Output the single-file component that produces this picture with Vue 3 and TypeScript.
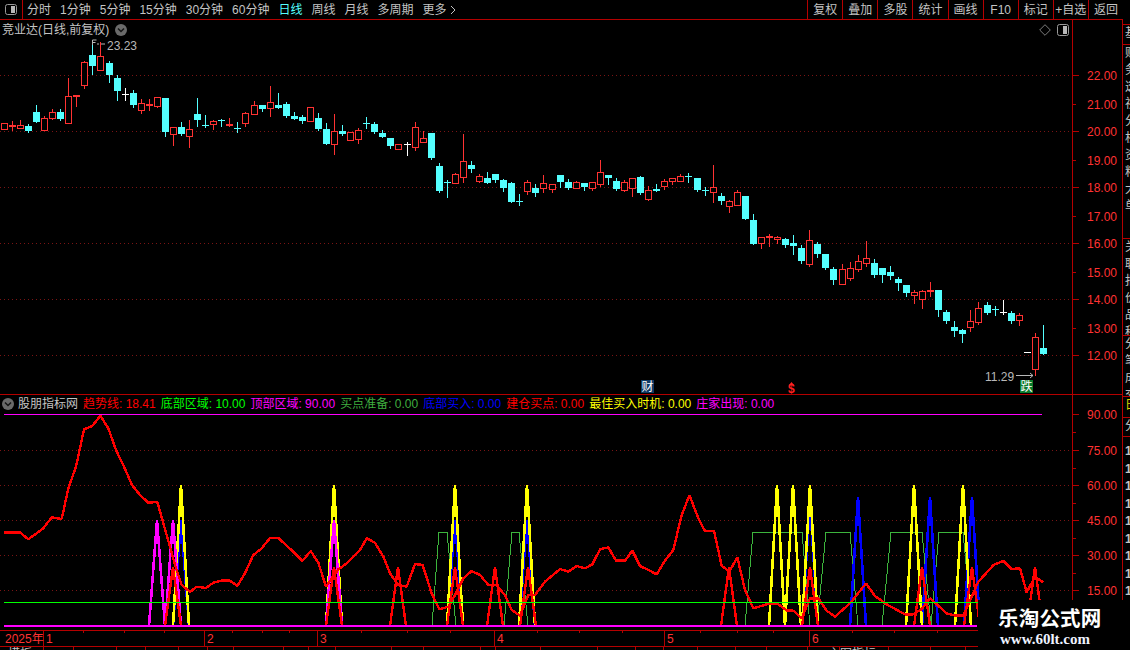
<script setup lang="ts">
type CandleKind = 'r' | 'f' | 'c' | 'w'
type CandleRow = [CandleKind, number, number, number, number]

// rows are [kind, high, bodyTop, bodyBottom, low], read off at 3x and scaled back by toCandles
const rowsA: CandleRow[] = [
	['r', 310, 310, 326, 326], ['f', 304, 316, 320, 330], ['r', 300, 316, 323, 325], ['c', 313, 319, 332, 335],
	['c', 255, 276, 306, 306], ['r', 288, 295, 329, 329], ['r', 268, 277, 293, 296], ['c', 268, 277, 297, 300],
	['r', 174, 229, 308, 308], ['f', 226, 226, 231, 258], ['r', 123, 127, 194, 204], ['c', 60, 105, 137, 162],
	['r', 65, 109, 149, 149], ['c', 123, 129, 165, 186], ['c', 166, 174, 213, 240], ['w', 204, 222, 222, 240],
	['c', 210, 219, 255, 261], ['r', 237, 250, 269, 279], ['f', 237, 252, 257, 270], ['r', 232, 232, 257, 260],
	['c', 234, 234, 335, 348], ['r', 322, 322, 341, 375], ['c', 306, 322, 342, 345], ['r', 300, 328, 347, 381],
	['c', 234, 282, 300, 318], ['c', 285, 316, 316, 322], ['r', 301, 304, 312, 327], ['c', 297, 301, 301, 318],
	['f', 294, 313, 318, 318], ['c', 306, 323, 323, 336], ['r', 277, 280, 308, 318], ['r', 243, 256, 281, 282],
	['c', 255, 255, 267, 272], ['r', 198, 247, 263, 288], ['c', 219, 255, 264, 264], ['c', 246, 252, 288, 290],
	['c', 276, 288, 297, 298], ['c', 285, 291, 303, 308], ['r', 262, 262, 302, 302], ['c', 279, 294, 327, 330],
	['c', 309, 327, 372, 372], ['r', 282, 333, 371, 402],
]
const rowsB: CandleRow[] = [
	['c', 45, 63, 72, 75], ['r', 66, 66, 90, 90], ['r', 55, 61, 87, 98], ['c', 21, 38, 38, 54],
	['c', 37, 42, 66, 68], ['c', 60, 69, 81, 82], ['c', 84, 84, 108, 113], ['r', 103, 103, 116, 116],
	['w', 97, 102, 102, 135], ['r', 37, 52, 110, 120], ['r', 64, 84, 95, 96], ['c', 69, 69, 144, 147],
	['c', 159, 168, 243, 246], ['c', 210, 216, 216, 261], ['r', 189, 193, 219, 219], ['r', 72, 154, 200, 216],
	['c', 153, 165, 177, 186], ['r', 193, 199, 213, 216], ['c', 186, 204, 219, 219], ['c', 192, 192, 210, 216],
	['c', 207, 210, 234, 243], ['c', 216, 219, 276, 276], ['c', 252, 273, 273, 285], ['r', 210, 216, 243, 252],
	['c', 222, 234, 249, 258], ['r', 195, 220, 234, 246], ['r', 222, 223, 236, 246], ['c', 195, 195, 216, 231],
	['c', 207, 216, 234, 237], ['r', 214, 217, 234, 234], ['c', 219, 219, 231, 240], ['r', 216, 217, 234, 240],
	['r', 150, 187, 222, 228], ['c', 195, 195, 204, 222], ['c', 204, 213, 237, 240], ['r', 210, 216, 240, 243],
	['r', 204, 205, 234, 258], ['c', 198, 201, 249, 252], ['r', 228, 240, 267, 270], ['c', 222, 237, 243, 243],
	['r', 207, 213, 228, 237], ['r', 204, 205, 213, 222], ['r', 192, 198, 213, 213], ['c', 189, 198, 198, 216],
	['c', 204, 204, 240, 243], ['c', 231, 240, 240, 255], ['r', 165, 231, 246, 276], ['c', 249, 258, 273, 282],
	['r', 270, 273, 288, 306],
]
const rowsC: CandleRow[] = [
	['r', 60, 67, 105, 105], ['c', 78, 78, 147, 147], ['c', 132, 150, 222, 222], ['r', 202, 202, 219, 234],
	['f', 192, 198, 204, 228], ['r', 198, 202, 208, 219], ['c', 204, 207, 225, 231], ['c', 195, 219, 228, 252],
	['c', 225, 234, 273, 279], ['r', 180, 210, 282, 288], ['c', 216, 222, 252, 261], ['c', 252, 252, 294, 297],
	['c', 291, 297, 330, 342], ['r', 282, 297, 342, 342], ['r', 276, 294, 324, 330], ['r', 255, 273, 297, 303],
	['r', 213, 264, 278, 288], ['c', 267, 279, 315, 321], ['c', 294, 294, 315, 336], ['c', 288, 306, 318, 327],
	['c', 321, 327, 339, 360], ['c', 345, 345, 369, 378], ['r', 360, 366, 376, 399], ['r', 361, 364, 388, 414],
	['f', 336, 360, 365, 378], ['c', 360, 360, 420, 438], ['c', 420, 426, 453, 459], ['c', 453, 471, 483, 498],
	['c', 477, 480, 492, 516], ['r', 420, 454, 471, 483], ['r', 396, 414, 456, 462], ['c', 396, 405, 429, 432],
	['c', 408, 417, 417, 435], ['w', 390, 427, 427, 432], ['c', 423, 429, 453, 459], ['r', 429, 436, 450, 465],
	['w', 547, 547, 547, 547], ['r', 489, 501, 597, 615], ['c', 465, 534, 552, 552],
]

const toCandles = (rows: CandleRow[], originY: number) =>
	rows.map(([kind, hi, top, bot, lo]) => ({
		kind,
		hi: Math.round(originY + hi / 3),
		top: Math.round(originY + top / 3),
		bot: Math.round(originY + bot / 3),
		lo: Math.round(originY + lo / 3),
	}))

const candles = [...toCandles(rowsA, 20), ...toCandles(rowsB, 110), ...toCandles(rowsC, 170)].map((c, i) => ({
	...c,
	x: Math.floor(4.3 + 8.055 * i),
}))

const mainGrid = [75, 131, 187, 243, 299, 355]
const subGrid = [450, 485, 520, 555, 590]

const priceTicks = [
	{ label: '22.00', y: 75 }, { label: '21.00', y: 104 }, { label: '20.00', y: 131 }, { label: '19.00', y: 160 },
	{ label: '18.00', y: 187 }, { label: '17.00', y: 216 }, { label: '16.00', y: 243 }, { label: '15.00', y: 272 },
	{ label: '14.00', y: 299 }, { label: '13.00', y: 328 }, { label: '12.00', y: 355 },
]
const subTicks = [
	{ label: '90.00', y: 414 }, { label: '75.00', y: 450 }, { label: '60.00', y: 485 },
	{ label: '45.00', y: 520 }, { label: '30.00', y: 555 }, { label: '15.00', y: 590 },
]

const legend = [
	{ name: '趋势线', value: '18.41', color: '#ff0000' },
	{ name: '底部区域', value: '10.00', color: '#00ff00' },
	{ name: '顶部区域', value: '90.00', color: '#ff00ff' },
	{ name: '买点准备', value: '0.00', color: '#3fae3f' },
	{ name: '底部买入', value: '0.00', color: '#0000ff' },
	{ name: '建仓买点', value: '0.00', color: '#ff0000' },
	{ name: '最佳买入时机', value: '0.00', color: '#ffff00' },
	{ name: '庄家出现', value: '0.00', color: '#ff00ff' },
]

const periods = ['分时', '1分钟', '5分钟', '15分钟', '30分钟', '60分钟', '日线', '周线', '月线', '多周期']
const tools = ['复权', '叠加', '多股', '统计', '画线', 'F10', '标记', '+自选', '返回']

const scaled = (ox: number, oy: number, pts: number[][]) => pts.map(([x, y]) => `${ox + x / 3},${oy + y / 3}`)

const trend = [
	...scaled(0, 410, [[12, 367], [60, 367], [85, 388], [130, 355], [155, 322], [185, 327], [205, 235], [228, 170], [252, 58], [277, 48], [301, 17], [325, 55], [348, 120], [372, 170], [396, 225], [420, 255], [445, 278], [472, 276], [490, 340], [510, 410], [525, 465], [545, 525], [570, 546], [590, 530], [618, 534], [640, 518], [665, 512], [690, 512], [712, 528], [735, 490], [760, 435], [785, 415], [810, 384], [835, 384], [860, 407], [885, 430], [907, 453], [932, 423], [955, 458], [978, 530], [1015, 478], [1040, 460], [1080, 420]]),
	...scaled(360, 470, [[20, 205], [45, 218], [70, 260], [90, 310], [115, 345], [140, 350], [165, 282], [188, 285], [215, 370], [238, 418], [265, 410], [285, 375], [310, 325], [335, 303], [360, 315], [385, 345], [408, 345], [435, 375], [455, 420], [480, 437], [505, 375], [525, 375], [555, 335], [600, 297], [625, 305], [650, 288], [675, 295], [697, 283], [720, 238], [745, 232], [768, 272], [795, 272], [817, 242], [840, 288], [865, 300], [890, 313], [915, 272], [940, 240], [965, 135], [988, 77]]),
	...scaled(690, 470, [[0, 80], [25, 145], [45, 183], [72, 183], [95, 287], [118, 305], [142, 262], [165, 360], [190, 415], [240, 400], [262, 400], [290, 422], [310, 422], [335, 445], [360, 385], [385, 385], [410, 422], [435, 440], [480, 400], [528, 340], [555, 378], [590, 403], [645, 433], [670, 433], [695, 417], [720, 385], [770, 430], [795, 437], [820, 437], [865, 335], [900, 297]]),
	...scaled(930, 560, [[190, 15], [220, 3], [245, 27], [270, 25], [290, 97], [315, 50], [340, 67]]),
].join(' ')

const spike = (cx: number, peak: number) => `${cx - 8},626 ${cx},${peak} ${cx + 8},626`

const greenZones = [
	[432, 439, 447, 456], [504, 512, 519, 528], [745, 753, 802, 810],
	[817, 826, 850, 858], [882, 891, 922, 931], [931, 939, 963, 972],
].map(([a, b, c, d]) => `${a},626 ${b},532 ${c},532 ${d},626`)

const blueSpikes = [[181, 520], [334, 520], [455, 520], [527, 520], [810, 503], [858, 497], [930, 497], [972, 497]].map(([x, y]) => spike(x, y))
const yellowSpikes = [181, 334, 455, 527, 777, 793, 810, 914, 963].map((x) => spike(x, 485))
const magentaSpikes = [157, 173, 334].map((x) => spike(x, 520))
const redSpikes = [173, 334, 398, 455, 495, 528, 729, 810, 922, 972, 1035].map((x) => spike(x, 567))

const monthMarks = [
	{ label: '1', x: 43 }, { label: '2', x: 204 }, { label: '3', x: 317 },
	{ label: '4', x: 494 }, { label: '5', x: 664 }, { label: '6', x: 809 },
]
const minorTicks = [83, 124, 164, 232, 262, 289, 361, 407, 450, 537, 579, 622, 700, 737, 773, 852, 894, 937]
const footTicks = [43, 73, 116, 145, 178, 207, 233, 283, 308, 335, 391, 423, 480, 495, 540, 597, 635, 663, 697, 735, 766, 807, 839, 888, 930, 965]

const stripRows = [
	{ height: 5, text: '' },
	{ height: 20, text: '基' },
	{ height: 194, text: '财务透视分析资料大单' },
	{ height: 97, text: '关联报价品种' },
	{ height: 61, text: '分笔成交' },
	{ height: 21, text: '日', accent: true },
	{ height: 19, text: '分' },
	{ height: 213, text: '1111111111111', digits: true },
]
</script>

<template>
	<div class="screen">
		<header class="topbar">
			<div class="panel-btn">
				<svg width="12" height="11" viewBox="0 0 12 11">
					<rect x="0.5" y="0.5" width="11" height="10" rx="2" fill="none" stroke="#9a9a9a" />
					<rect x="6" y="2" width="4" height="7" fill="#b8b8b8" />
				</svg>
			</div>
			<nav class="periods">
				<span v-for="p in periods" :key="p" :class="{ active: p === '日线' }">{{ p }}</span>
				<span class="more">更多 <svg width="6" height="10" viewBox="0 0 6 10"><path d="M1 1l4 4-4 4" fill="none" stroke="#c4c4c4" /></svg></span>
			</nav>
			<div class="tools">
				<span v-for="t in tools" :key="t">{{ t }}</span>
			</div>
		</header>

		<div class="stage">
			<div class="charts">
				<section class="pane main-pane">
					<div class="plot">
						<svg class="chart" width="1072" height="374" viewBox="0 20 1072 374">
							<line v-for="y in mainGrid" :key="y" class="grid" x1="0" x2="1072" :y1="y + 0.5" :y2="y + 0.5" />
							<g v-for="c in candles" :key="c.x" :class="['candle', c.kind]" shape-rendering="crispEdges">
								<rect class="wick" :x="c.x" :y="c.hi" width="1" :height="Math.max(c.top - c.hi, 0)" />
								<rect class="wick" :x="c.x" :y="c.bot" width="1" :height="Math.max(c.lo - c.bot + 1, 0)" />
								<rect v-if="c.kind === 'r'" class="hollow" :x="c.x - 3 + 0.5" :y="c.top + 0.5" width="6" :height="c.bot - c.top" />
								<rect v-else class="solid" :x="c.x - 3" :y="c.top" width="7" :height="Math.max(c.bot - c.top, 1)" />
							</g>
							<path class="callout" d="M92.5 45v-5h4M92.5 42.5h3M97 44h2M101 44h4" />
							<text class="callout-text" x="107" y="50">23.23</text>
							<text class="callout-text" x="985" y="381">11.29</text>
							<path class="callout" d="M1016 375.5h17M1030 373l3 2.5-3 2.5" />
							<text class="red-mark" x="788" y="393">$</text>
							<path d="M791.5 382l2.5 3h-5z" fill="#ff2020" />
						</svg>
						<div class="stock-title">
							<span>竞业达(日线,前复权)</span>
							<svg class="chev" width="12" height="12" viewBox="0 0 12 12">
								<circle cx="6" cy="6" r="6" fill="#6a6a6a" />
								<path d="M3 4.5l3 3 3-3" fill="none" stroke="#151515" stroke-width="1.5" />
							</svg>
						</div>
						<div class="corner-icons">
							<svg width="12" height="12" viewBox="0 0 12 12"><path d="M6 .7L11.3 6 6 11.3.7 6z" fill="none" stroke="#7d7d7d" /></svg>
							<svg width="12" height="12" viewBox="0 0 12 12">
								<rect x="0.5" y="0.5" width="11" height="11" rx="2" fill="none" stroke="#9a9a9a" />
								<rect x="6" y="2" width="4" height="8" fill="#b8b8b8" />
							</svg>
						</div>
						<span class="flag flag-blue">财</span>
						<span class="flag flag-green">跌</span>
					</div>
					<svg class="axis" width="50" height="374" viewBox="1073 20 50 374" shape-rendering="crispEdges">
						<g v-for="(t, i) in priceTicks" :key="t.label">
							<rect class="tick" x="1073" :y="t.y" :width="i % 2 === 0 ? 6 : 3" height="1" />
							<text class="axis-text" x="1087" :y="t.y + 5">{{ t.label }}</text>
						</g>
					</svg>
				</section>

				<section class="sub-pane">
					<div class="plot">
						<div class="legend">
							<svg class="chev" width="12" height="12" viewBox="0 0 12 12">
								<circle cx="6" cy="6" r="6" fill="#6a6a6a" />
								<path d="M3 4.5l3 3 3-3" fill="none" stroke="#151515" stroke-width="1.5" />
							</svg>
							<span class="indicator">股朋指标网</span>
							<span v-for="l in legend" :key="l.name" :style="{ color: l.color }">{{ l.name }}: {{ l.value }}</span>
						</div>
						<svg class="chart" width="1072" height="218" viewBox="0 412 1072 218">
							<line v-for="y in subGrid" :key="y" class="grid" x1="0" x2="1072" :y1="y + 0.5" :y2="y + 0.5" />
							<g shape-rendering="crispEdges" fill="none" stroke-linejoin="bevel">
								<polyline v-for="z in greenZones" :key="z" :points="z" stroke="#3cb43c" />
								<polyline v-for="s in blueSpikes" :key="s" :points="s" stroke="#0000ff" stroke-width="2.6" />
								<polyline v-for="s in yellowSpikes" :key="s" :points="s" stroke="#ffff00" stroke-width="2.6" />
								<polyline v-for="s in magentaSpikes" :key="s" :points="s" stroke="#ff00ff" stroke-width="2.6" />
								<polyline v-for="s in redSpikes" :key="s" :points="s" stroke="#ff0000" stroke-width="2.4" />
								<polyline :points="trend" stroke="#ff0000" stroke-width="2.4" />
								<rect x="4" y="414" width="1038" height="1" fill="#ff00ff" />
								<rect x="4" y="602" width="1038" height="1" fill="#00ff00" />
								<rect x="4" y="625" width="973" height="2" fill="#ff00ff" />
							</g>
						</svg>
					</div>
					<svg class="axis" width="50" height="235" viewBox="1073 395 50 235" shape-rendering="crispEdges">
						<g v-for="t in subTicks" :key="t.label">
							<rect class="tick" x="1073" :y="t.y" width="6" height="1" />
							<rect class="tick" x="1073" :y="t.y + 18" width="3" height="1" />
							<text class="axis-text" x="1087" :y="t.y + 5">{{ t.label }}</text>
						</g>
					</svg>
				</section>

				<svg class="time-axis" width="1123" height="20" viewBox="0 630 1123 20" shape-rendering="crispEdges">
					<rect x="0" y="630" width="1123" height="1" class="tick" />
					<rect x="0" y="646" width="1123" height="1" class="tick" />
					<rect v-for="x in minorTicks" :key="x" class="tick" :x="x" y="631" width="1" height="2" />
					<rect v-for="x in footTicks" :key="x" class="tick" :x="x" y="647" width="1" height="3" />
					<g v-for="m in monthMarks" :key="m.label">
						<rect class="tick" :x="m.x" y="631" width="1" height="15" />
						<text class="time-text" :x="m.x + 3" y="643">{{ m.label }}</text>
					</g>
					<text class="time-text" x="5" y="643">2025年</text>
					<text class="foot-text" x="8" y="658">模板</text>
					<text class="foot-text" x="828" y="658">主图指标</text>
				</svg>
			</div>

			<aside class="strip">
				<div v-for="(row, i) in stripRows" :key="i" class="strip-row" :class="{ accent: row.accent, digits: row.digits }" :style="{ height: row.height + 'px' }">
					<span v-for="(ch, j) in row.text" :key="j">{{ ch }}</span>
				</div>
			</aside>
		</div>

		<div class="watermark">
			<div class="wm-name">乐淘公式网</div>
			<div class="wm-url">www.60lt.com</div>
		</div>
	</div>
</template>

<style>
html,
body {
	margin: 0;
	background: #000;
}
</style>

<style scoped>
.screen {
	position: relative;
	display: flex;
	flex-direction: column;
	width: 1130px;
	height: 650px;
	overflow: hidden;
	background: #000;
	color: #c4c4c4;
	font: 12px/14px "Liberation Sans", "Noto Sans CJK SC", sans-serif;
}

.topbar {
	display: flex;
	flex: none;
	align-items: stretch;
	width: 1123px;
	height: 19px;
	border-bottom: 1px solid #b40000;
}

.panel-btn {
	display: flex;
	align-items: center;
	justify-content: center;
	width: 22px;
	border-right: 1px solid #b40000;
}

.periods {
	display: flex;
	align-items: center;
	gap: 9px;
	padding-left: 4px;
}

.periods .active {
	color: #54ffff;
}

.more svg {
	vertical-align: -1px;
}

.tools {
	display: grid;
	grid-template-columns: repeat(9, 35.1px);
	margin-left: auto;
}

.tools span {
	display: flex;
	align-items: center;
	justify-content: center;
	border-left: 1px solid #b40000;
}

.stage {
	display: flex;
	flex: 1;
	min-height: 0;
}

.charts {
	display: flex;
	flex-direction: column;
	width: 1123px;
}

.main-pane {
	display: flex;
	flex: none;
	height: 374px;
	border-bottom: 1px solid #b40000;
}

.sub-pane {
	display: flex;
	flex: none;
	height: 235px;
}

.plot {
	position: relative;
	flex: none;
	width: 1072px;
}

.sub-pane .plot {
	display: flex;
	flex-direction: column;
}

.chart,
.axis,
.time-axis {
	display: block;
	flex: none;
}

.axis {
	border-left: 1px solid #b40000;
}

.grid {
	stroke: #7a1414;
	stroke-dasharray: 1 3;
}

.candle.r .wick,
.candle.f .wick,
.candle.f .solid {
	fill: #ff3232;
}

.candle.c .wick,
.candle.c .solid {
	fill: #54ffff;
}

.candle.w .wick,
.candle.w .solid {
	fill: #ffffff;
}

.hollow {
	fill: #000;
	stroke: #ff3232;
}

.callout {
	fill: none;
	stroke: #b8b8b8;
}

.callout-text {
	fill: #b8b8b8;
	font-size: 12px;
}

.red-mark {
	fill: #ff2020;
	font-size: 12px;
	font-weight: 700;
}

.tick {
	fill: #b40000;
}

.axis-text,
.time-text {
	fill: #ff3232;
	font-size: 12px;
}

.foot-text {
	fill: #c4c4c4;
	font-size: 12px;
}

.stock-title {
	position: absolute;
	top: 3px;
	left: 2px;
	display: flex;
	align-items: center;
	gap: 6px;
}

.corner-icons {
	position: absolute;
	top: 4px;
	right: 3px;
	display: flex;
	gap: 6px;
}

.flag {
	position: absolute;
	top: 360px;
	display: flex;
	align-items: center;
	justify-content: center;
	width: 13px;
	height: 13px;
	color: #fff;
}

.flag-blue {
	left: 641px;
	background: #0e3a66;
}

.flag-green {
	left: 1020px;
	background: #0a7a2a;
}

.legend {
	display: flex;
	flex: none;
	align-items: center;
	gap: 5px;
	height: 17px;
	padding-left: 2px;
	white-space: nowrap;
}

.indicator {
	color: #c4c4c4;
	margin-left: -1px;
}

.strip {
	display: flex;
	flex-direction: column;
	flex: none;
	width: 7px;
	overflow: hidden;
	border-left: 1px solid #b40000;
	margin-left: -1px;
}

.strip-row {
	display: flex;
	flex-direction: column;
	flex: none;
	box-sizing: border-box;
	width: 14px;
	padding-left: 2px;
	overflow: hidden;
	border-bottom: 1px solid #b40000;
	line-height: 17px;
}

.strip-row.accent {
	color: #d8d800;
}

.strip-row.digits {
	border-bottom: 0;
	font-weight: 700;
	line-height: 17.5px;
	padding-top: 6px;
}

.watermark {
	position: absolute;
	right: 0;
	bottom: 0;
	display: flex;
	flex-direction: column;
	align-items: flex-start;
	box-sizing: border-box;
	width: 152px;
	height: 50px;
	padding: 8px 0 0 20px;
	background: #000;
	color: #fff;
}

.wm-name {
	font-size: 20.5px;
	font-weight: 700;
	line-height: 22px;
	letter-spacing: 0.2px;
}

.wm-url {
	margin-top: 2px;
	margin-left: 2px;
	font: 700 15px/14px "Liberation Serif", serif;
	color: #eef2ff;
}
</style>
